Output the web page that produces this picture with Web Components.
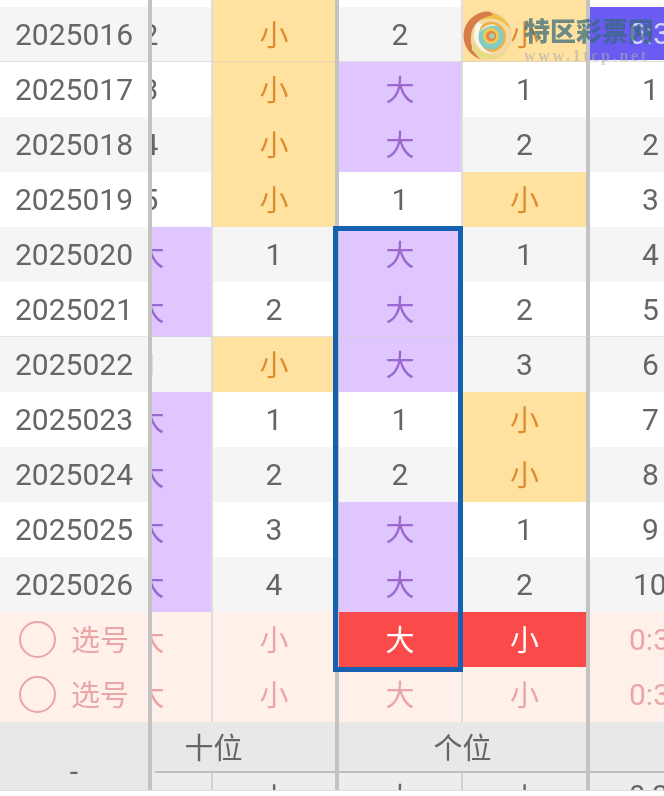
<!DOCTYPE html>
<html><head><meta charset="utf-8">
<style>
html,body{margin:0;padding:0;background:#fff;height:796px;overflow:hidden}
body{font-family:Roboto,"Noto Sans CJK SC",sans-serif}
</style></head><body>
<draw-sheet></draw-sheet>
<script>
const COLS='148px 4px 61px 122px 4px 124px 123px 4px 1fr';
class TrendCell extends HTMLElement{
  constructor(){super();this.attachShadow({mode:'open'}).innerHTML=`<style>
  :host{display:flex;align-items:center;justify-content:center;overflow:hidden;box-sizing:border-box;min-width:0;font-size:30px;color:#666;height:100%;border-right:var(--br,none)}
  :host([k=s]){background:#ffe2a0;color:#dc8d2e}
  :host([k=b]){background:#e0c6ff;color:#9a68cf}
  :host([k=rb]),:host([k=rs]){background:#fb4a4a;color:#fff;border-right-color:#fb4a4a}
  :host([k=ps]),:host([k=pb]),:host([k=pt]){color:#eaa5a7}
  :host([clip]){justify-content:flex-start}
  :host([clip]) .w{width:124px;flex:none;margin-left:-64px;text-align:center}
  .w{display:block;white-space:nowrap}
  </style><div class="w"><slot></slot></div>`}
}
customElements.define('trend-cell',TrendCell);

class CjkT extends HTMLElement{
  constructor(){super();this.attachShadow({mode:'open'}).innerHTML=`<style>:host{font-family:"Noto Sans CJK SC",sans-serif;font-size:29px;font-weight:400;position:relative;top:-2px}</style><slot></slot>`}
}
customElements.define('cjk-t',CjkT);

class TrendRow extends HTMLElement{
  constructor(){super();this.attachShadow({mode:'open'}).innerHTML=`<style>
  :host{display:grid;grid-template-columns:${COLS};height:55px;background:var(--bg,#fff);box-sizing:border-box;position:relative}
  :host([ruled])::after{content:"";position:absolute;left:0;right:0;bottom:-1px;height:2px;background:rgba(205,205,205,.55)}
  ::slotted(.bar){background:#c3c3c3}
  ::slotted(.head){font-size:30px;color:#666;padding-left:15px;display:flex;align-items:center;height:100%;min-width:0}
  </style><slot></slot>`}
}
customElements.define('trend-row',TrendRow);

class PickDot extends HTMLElement{
  constructor(){super();this.attachShadow({mode:'open'}).innerHTML=`<style>
  :host{display:flex;align-items:center;gap:15px;padding-left:19px;height:100%;color:#eaa5a7;font-family:"Noto Sans CJK SC",sans-serif;font-size:29px;font-weight:400}
  i{display:block;width:33px;height:33px;border:2px solid #e9a5a7;border-radius:50%;flex:none}
  span{position:relative;top:-2px}
  </style><i></i><span><slot></slot></span>`}
}
customElements.define('pick-dot',PickDot);

class WaterMark extends HTMLElement{
  constructor(){super();this.attachShadow({mode:'open'}).innerHTML=`<style>
  :host{position:absolute;left:463px;top:11px;width:201px;height:54px;display:flex;gap:11px;pointer-events:none}
  svg{flex:none;width:50px;height:50px}
  .t{display:flex;flex-direction:column;align-items:flex-start}
  .a{font-family:"Noto Sans CJK SC",sans-serif;font-size:26px;line-height:30px;font-weight:900;color:rgba(52,104,122,.72);white-space:nowrap;margin-top:4px}
  .b{font-family:"Liberation Serif",serif;font-size:16px;line-height:14px;letter-spacing:2.7px;font-weight:700;color:rgba(165,172,180,.55);margin-top:4px;white-space:nowrap}
  </style>
  <svg viewBox="0 0 50 50"><circle cx="25" cy="25" r="24.5" fill="#f3d9a0"/>
  <path d="M18 2C29-1 43 5 48 19 41 10 31 5 18 9z" fill="#f2bf45"/>
  <path d="M24 .6C10 1.500 .6 13 .6 25c0 12 8 20 17 23.500C10 41 7 33 8 25 9 14 16 7 30 4c-2-3-4-3.400-6-3.400z" fill="#d67d49"/>
  <path d="M9 39c8 10 26 12 36 2-10 6-26 5-36-9z" fill="#e8dc80"/>
  <path d="M15 11C6 24 13 42 30 43 19 38 13 27 21 15z" fill="#fbf6ea"/>
  <path d="M20 13C30 7 42 13 43 25c0 9-7 16-15 16C21 40 16 33 16 25c0-5 1-9 4-12z" fill="#eab04e"/>
  <circle cx="28" cy="26" r="12.500" fill="#7fcdc6"/>
  <path d="M17 21c3-7 12-10 18-6-6-1-13 1-18 6z" fill="#f6e7b0"/>
  <circle cx="28" cy="25" r="8" fill="#f1c858"/><circle cx="28" cy="25" r="5.200" fill="#df8c45"/><circle cx="29" cy="25" r="2.500" fill="#9fd6cc"/></svg>
  <div class="t"><div class="a">特区彩票网</div><div class="b">www.1tcp.net</div></div>`}
}
customElements.define('water-mark',WaterMark);

class DrawSheet extends HTMLElement{
  constructor(){super();
    const data=[
     ['2025016','2','s','2','s','0:3'],
     ['2025017','3','s','b','1','1'],
     ['2025018','4','s','b','2','2'],
     ['2025019','5','s','1','s','3'],
     ['2025020','b','1','b','1','4'],
     ['2025021','b','2','b','2','5'],
     ['2025022','1','s','b','3','6'],
     ['2025023','b','1','1','s','7'],
     ['2025024','b','2','2','s','8'],
     ['2025025','b','3','b','1','9'],
     ['2025026','b','4','b','2','10']];
    const TH='--br:2px solid #dedede';
    const cell=(v,opt='',st='')=>{
      const s=st?` style="${st}"`:'';
      if(v==='s')return `<trend-cell k="s"${opt}${s}><cjk-t>小</cjk-t></trend-cell>`;
      if(v==='b')return `<trend-cell k="b"${opt}${s}><cjk-t>大</cjk-t></trend-cell>`;
      return `<trend-cell${opt}${s}>${v}</trend-cell>`};
    const rows=data.map((r,i)=>`<trend-row style="--bg:${i%2?'#fff':'#f5f5f5'}"${(i==0||i==5)?' ruled':''}>
      <div class="head">${r[0]}</div><div class="bar"></div>
      ${cell(r[1],' clip',TH)}${cell(r[2])}<div class="bar"></div>${cell(r[3],'',TH)}${cell(r[4])}<div class="bar"></div>
      ${i==0?`<trend-cell style="background:#6a5cf2;color:#d5d6ff;justify-content:flex-start;padding-left:39px;height:53px">0:3</trend-cell>`:`<trend-cell style="justify-content:flex-start;padding-left:${r[5]=='10'?43:52}px">${r[5]}</trend-cell>`}
      </trend-row>`).join('');
    const pick=(red)=>`<trend-row style="--bg:#fff0ea">
      <div class="head" style="padding:0"><pick-dot>选号</pick-dot></div><div class="bar"></div>
      <trend-cell k="pb" clip style="${TH}"><cjk-t>大</cjk-t></trend-cell><trend-cell k="ps"><cjk-t>小</cjk-t></trend-cell><div class="bar"></div>
      <trend-cell k="${red?'rb':'pb'}" style="--br:2px solid ${red?'#fb4a4a':'#dedede'}"><cjk-t>大</cjk-t></trend-cell><trend-cell k="${red?'rs':'ps'}"><cjk-t>小</cjk-t></trend-cell>
      <div class="bar"></div><trend-cell k="pt" style="justify-content:flex-start;padding-left:39px">0:3</trend-cell></trend-row>`;
    this.attachShadow({mode:'open'}).innerHTML=`<style>
    :host{display:block;position:relative;width:664px;height:796px;overflow:hidden;background:#fff;font-family:Roboto,"Noto Sans CJK SC",sans-serif;filter:blur(.35px)}
    .top{display:grid;grid-template-columns:${COLS};height:7px}
    .bar{background:#c3c3c3}
    .y{background:#ffe2a0}
    .thin{border-right:2px solid #dedede}
    .foot{display:grid;grid-template-columns:${COLS};grid-template-rows:49px 2px 17px;background:#e8e8e8;color:#666;border-bottom:1px solid #ddd}
    .l{grid-row:1/4;grid-column:1;display:flex;justify-content:center;align-items:center;font-size:30px;padding-top:30px;box-sizing:border-box}
    .b2{grid-row:1/4;grid-column:2}
    .b5{grid-row:1/4;grid-column:5}
    .b8{grid-row:1/4;grid-column:8}
    .h{grid-row:1;display:flex;align-items:center;justify-content:center;font-family:"Noto Sans CJK SC",sans-serif;font-size:29px;font-weight:400;padding-top:1px;box-sizing:border-box;overflow:hidden;position:relative}
    .h span{position:relative;top:-1px}
    .ln{grid-row:2;background:#bdbdbd}
    .sub{grid-row:3;background:#ededed;overflow:hidden;text-align:center;font-family:"Noto Sans CJK SC",sans-serif;font-size:29px;line-height:47px;min-width:0;box-sizing:border-box}
    .sub.d{border-right:2px solid #d2d2d2}
    .box{position:absolute;left:333px;top:226px;width:130px;height:446px;box-sizing:border-box;border:5px solid #1560b0;pointer-events:none}
    </style>
    <div class="top"><div></div><div class="bar"></div><div class="thin"></div><div class="y"></div><div class="bar"></div><div class="thin"></div><div class="y"></div><div class="bar"></div><div></div></div>
    ${rows}${pick(true)}${pick(false)}
    <div class="foot">
      <div class="l">-</div><div class="bar b2"></div>
      <div class="h" style="grid-column:3/5;padding-right:60px"><span>十位</span></div>
      <div class="ln" style="grid-column:3/5;margin-left:3px"></div>
      <div class="sub d" style="grid-column:3"></div><div class="sub" style="grid-column:4">小</div>
      <div class="bar b5"></div>
      <div class="h" style="grid-column:6/8"><span>个位</span></div>
      <div class="ln" style="grid-column:6/8"></div>
      <div class="sub d" style="grid-column:6">大</div><div class="sub" style="grid-column:7">小</div>
      <div class="bar b8"></div>
      <div class="ln" style="grid-column:9"></div>
      <div class="sub" style="grid-column:9;text-align:left;padding-left:39px;font-family:Roboto">0:3</div>
    </div>
    <div class="box"></div>
    <water-mark></water-mark>`;
  }
}
customElements.define('draw-sheet',DrawSheet);
</script></body></html>
